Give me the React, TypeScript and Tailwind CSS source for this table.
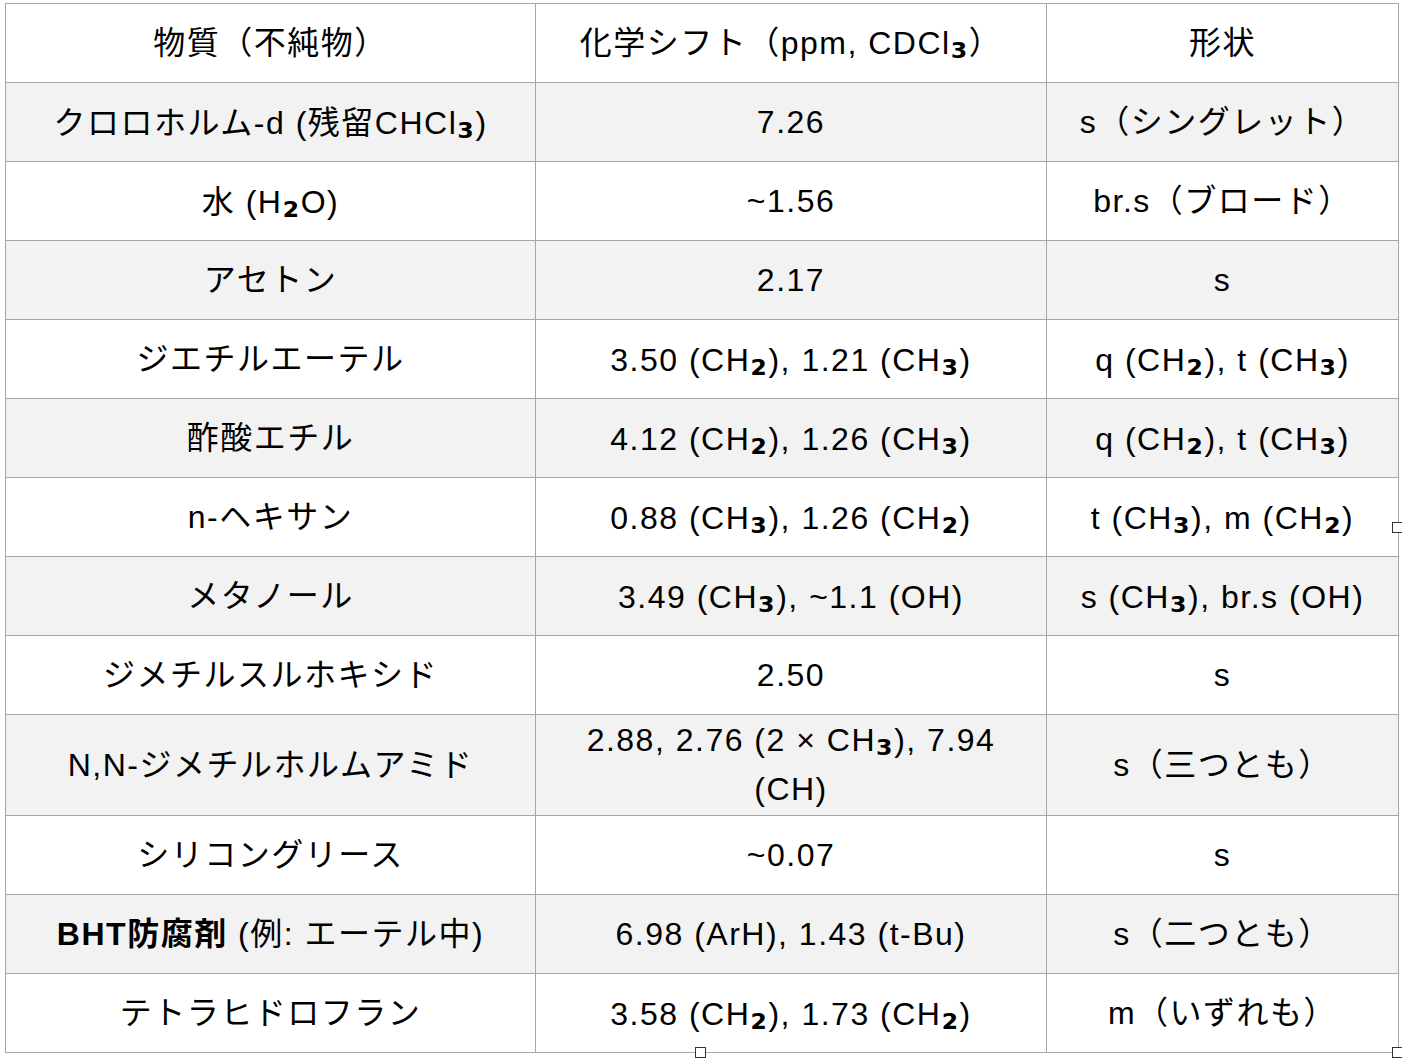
import React from "react";

const font = {
  fontFamily: '"Liberation Sans", "Noto Sans CJK JP", sans-serif',
};

// subscripts drawn bold and larger, as in the reference
function Chem({ t }: { t: string }) {
  const parts = t.split(/([₂₃])/);
  return (
    <>
      {parts.map((p, i) =>
        p === "₂" || p === "₃" ? (
          <span
            key={i}
            className="relative top-[4px] font-bold text-[38px] leading-none"
            style={{ fontFamily: '"DejaVu Sans", sans-serif' }}
          >
            {p}
          </span>
        ) : (
          <React.Fragment key={i}>{p}</React.Fragment>
        )
      )}
    </>
  );
}

type Row = { name: React.ReactNode; shift: React.ReactNode; shape: React.ReactNode; tall?: boolean };

const rows: Row[] = [
  { name: <Chem t="クロロホルム-d (残留CHCl₃)" />, shift: "7.26", shape: "s（シングレット）" },
  { name: <Chem t="水 (H₂O)" />, shift: "~1.56", shape: "br.s（ブロード）" },
  { name: "アセトン", shift: "2.17", shape: "s" },
  { name: "ジエチルエーテル", shift: <Chem t="3.50 (CH₂), 1.21 (CH₃)" />, shape: <Chem t="q (CH₂), t (CH₃)" /> },
  { name: "酢酸エチル", shift: <Chem t="4.12 (CH₂), 1.26 (CH₃)" />, shape: <Chem t="q (CH₂), t (CH₃)" /> },
  { name: "n-ヘキサン", shift: <Chem t="0.88 (CH₃), 1.26 (CH₂)" />, shape: <Chem t="t (CH₃), m (CH₂)" /> },
  { name: "メタノール", shift: <Chem t="3.49 (CH₃), ~1.1 (OH)" />, shape: <Chem t="s (CH₃), br.s (OH)" /> },
  { name: "ジメチルスルホキシド", shift: "2.50", shape: "s" },
  {
    name: "N,N-ジメチルホルムアミド",
    shift: (
      <>
        <Chem t="2.88, 2.76 (2 × CH₃), 7.94" />
        <br />
        (CH)
      </>
    ),
    shape: "s（三つとも）",
    tall: true,
  },
  { name: "シリコングリース", shift: "~0.07", shape: "s" },
  {
    name: (
      <>
        <span className="font-bold">BHT防腐剤</span> (例: エーテル中)
      </>
    ),
    shift: "6.98 (ArH), 1.43 (t-Bu)",
    shape: "s（二つとも）",
  },
  { name: "テトラヒドロフラン", shift: <Chem t="3.58 (CH₂), 1.73 (CH₂)" />, shape: "m（いずれも）" },
];

const cell = "border border-[#a6a6a6] text-center align-middle px-1 whitespace-nowrap";

export default function App() {
  return (
    <div className="relative w-[1402px] h-[1058px] bg-white text-black" style={font}>
      <div className="pt-[3px] pl-[5px]">
        <table className="border-collapse table-fixed w-[1393px] text-[32px] tracking-[1.5px]">
          <colgroup>
            <col className="w-[530px]" />
            <col className="w-[511px]" />
            <col className="w-[352px]" />
          </colgroup>
          <thead>
            <tr className="h-[79px] bg-white">
              <th className={`${cell} font-normal`}>物質（不純物）</th>
              <th className={`${cell} font-normal`}>
                <Chem t="化学シフト（ppm, CDCl₃）" />
              </th>
              <th className={`${cell} font-normal`}>形状</th>
            </tr>
          </thead>
          <tbody>
            {rows.map((r, i) => (
              <tr
                key={i}
                className={`${r.tall ? "h-[101px]" : "h-[79px]"} ${i % 2 === 0 ? "bg-[#f2f2f2]" : "bg-white"}`}
              >
                <td className={`${cell} leading-tight`}>{r.name}</td>
                <td className={`${cell} ${r.tall ? "leading-[49px]" : "leading-tight"}`}>{r.shift}</td>
                <td className={`${cell} leading-tight`}>{r.shape}</td>
              </tr>
            ))}
          </tbody>
        </table>
      </div>
      {/* selection handles */}
      <div className="absolute left-[695px] top-[1047px] w-[11px] h-[11px] border border-[#333] bg-white" />
      <div className="absolute left-[1392px] top-[522px] w-[11px] h-[11px] border border-[#333] bg-white" />
      <div className="absolute left-[1392px] top-[1047px] w-[11px] h-[11px] border border-[#333] bg-white" />
    </div>
  );
}
